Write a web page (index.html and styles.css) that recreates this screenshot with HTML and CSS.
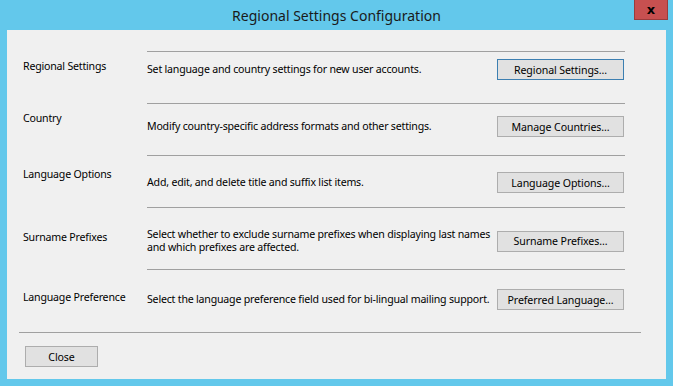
FILE: index.html
```html
<!DOCTYPE html>
<html lang="en">
<head>
    <meta charset="UTF-8">
    <meta name="viewport" content="width=device-width, initial-scale=1.0">
    <title>Regional Settings Configuration</title>
    <link rel="stylesheet" href="styles.css">
</head>
<body>
    <div class="window">
        <div class="titlebar">
            <span class="title">Regional Settings Configuration</span>
            <button class="close-x" title="Close">x</button>
        </div>

        <div class="panel">
            <div class="section s1">
                <div class="label">Regional Settings</div>
                <div class="body">
                    <p class="desc">Set language and country settings for new user accounts.</p>
                    <button class="btn focused">Regional Settings...</button>
                </div>
            </div>

            <div class="section s2">
                <div class="label">Country</div>
                <div class="body">
                    <p class="desc">Modify country-specific address formats and other settings.</p>
                    <button class="btn">Manage Countries...</button>
                </div>
            </div>

            <div class="section s3">
                <div class="label">Language Options</div>
                <div class="body">
                    <p class="desc">Add, edit, and delete title and suffix list items.</p>
                    <button class="btn">Language Options...</button>
                </div>
            </div>

            <div class="section s4">
                <div class="label">Surname Prefixes</div>
                <div class="body">
                    <p class="desc">Select whether to exclude surname prefixes when displaying last names<br>and which prefixes are affected.</p>
                    <button class="btn">Surname Prefixes...</button>
                </div>
            </div>

            <div class="section s5">
                <div class="label">Language Preference</div>
                <div class="body">
                    <p class="desc">Select the language preference field used for bi-lingual mailing support.</p>
                    <button class="btn">Preferred Language...</button>
                </div>
            </div>

            <div class="footer">
                <button class="btn close">Close</button>
            </div>
        </div>
    </div>
</body>
</html>
```

FILE: styles.css
```css
body {
    margin: 0;
    padding: 0;
    background-color: #63c8eb;
    font-family: "Noto Sans", "Open Sans", sans-serif;
    font-size: 10.6px;
    letter-spacing: -0.2px;
    color: #000;
}
.window {
    width: 673px;
    height: 386px;
}
.titlebar {
    position: relative;
    height: 30px;
    display: flex;
    align-items: center;
    justify-content: center;
}
.title {
    font-size: 14px;
    letter-spacing: 0;
    color: #1a1a1a;
}
.close-x {
    position: absolute;
    top: 0;
    right: 5px;
    width: 34px;
    height: 20px;
    padding: 0;
    background-color: #c75050;
    border: 1px solid #9a3c3c;
    border-top: none;
    color: #000;
    font-family: "DejaVu Sans", sans-serif;
    font-weight: bold;
    font-size: 13px;
    line-height: 17px;
}
.panel {
    margin-left: 7px;
    width: 659px;
    height: 349px;
    box-sizing: border-box;
    padding-top: 21px;
    background-color: #f0f0f0;
}
.section {
    display: grid;
    grid-template-columns: 124px 478px;
    padding-left: 16px;
}
.label {
    line-height: 13px;
    white-space: nowrap;
}
.body {
    box-sizing: border-box;
    border-top: 1px solid #a0a0a0;
    display: flex;
    align-items: center;
    justify-content: space-between;
    align-self: start;
}
.desc {
    margin: 0;
    line-height: 13px;
    white-space: nowrap;
}
.btn {
    font-family: "Noto Sans", "Open Sans", sans-serif;
    font-size: 10.6px;
    letter-spacing: -0.1px;
    color: #000;
    background-color: #e1e1e1;
    border: 1px solid #adadad;
    padding: 0;
    width: 127px;
    height: 21px;
    margin-right: 1px;
    white-space: nowrap;
    flex-shrink: 0;
}
.btn.focused {
    border-color: #3c7fb1;
}

/* each row sits where the original form placed it */
.s1 { height: 52px; }
.s1 .label { margin-top: 9px; }
.s1 .body { padding-top: 7px; }
.s2 { height: 52px; }
.s2 .label { margin-top: 9px; }
.s2 .body { padding-top: 12px; }
.s3 { height: 52px; }
.s3 .label { margin-top: 13px; }
.s3 .body { padding-top: 16px; }
.s4 { height: 62px; }
.s4 .label { margin-top: 24px; }
.s4 .body { padding-top: 20px; }
.s5 { height: 63px; }
.s5 .label { margin-top: 22px; }
.s5 .body { padding-top: 19px; }

.footer {
    margin: 0 25px 0 12px;
    border-top: 1px solid #a0a0a0;
    padding: 13px 0 0 6px;
}
.btn.close {
    width: 73px;
}
```
